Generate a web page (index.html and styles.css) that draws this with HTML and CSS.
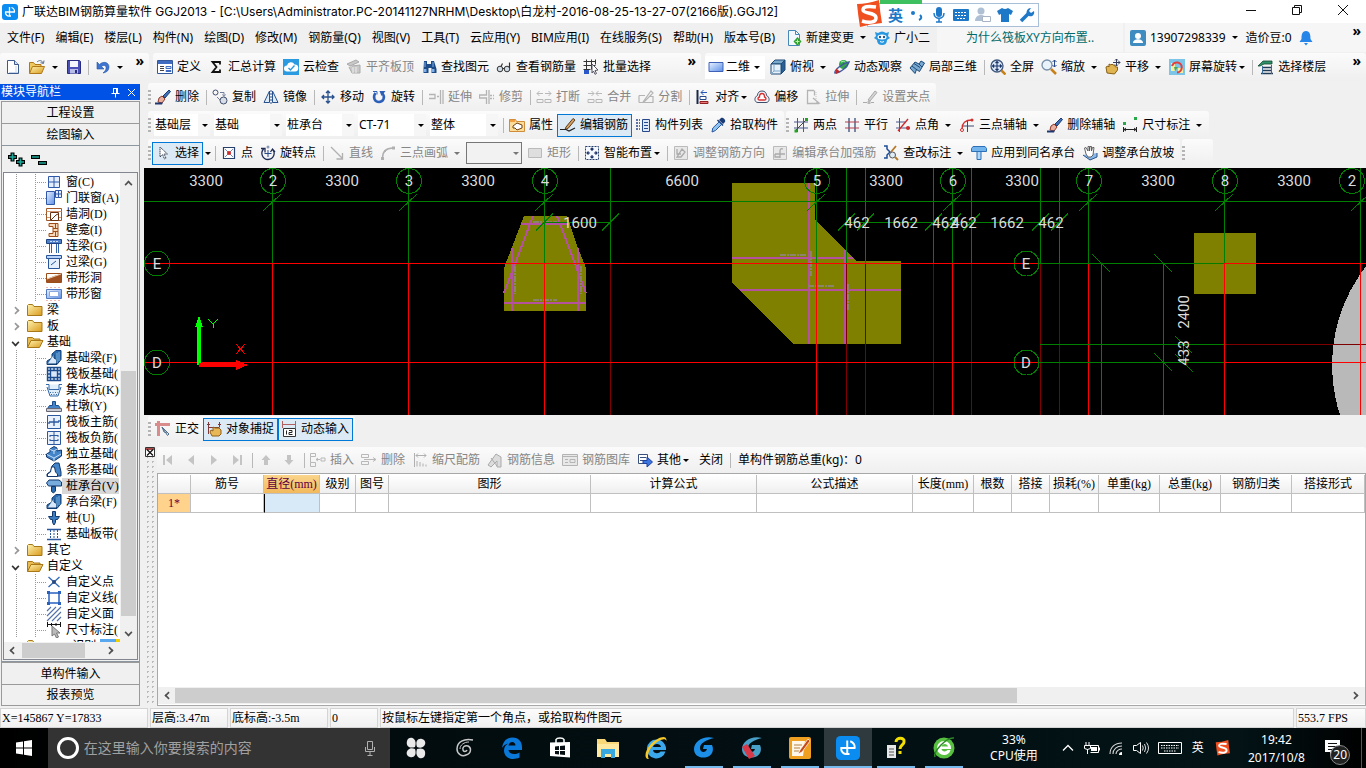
FILE: index.html
```html
<!DOCTYPE html>
<html lang="zh-CN">
<head>
  <meta charset="UTF-8" />
  <meta name="viewport" content="width=device-width, initial-scale=1.0"/>
  <title>广联达BIM钢筋算量软件 GGJ2013</title>
  <link rel="stylesheet" href="styles.css">
</head>
<body>

  <!-- icon set -->
  <svg class="sprite" aria-hidden="true">
    <defs>
      <linearGradient id="g-blue" x1="0" y1="0" x2="1" y2="1"><stop offset="0" stop-color="#eaf3ff"/><stop offset="1" stop-color="#5b8fe8"/></linearGradient>
      <linearGradient id="g-fold" x1="0" y1="0" x2="1" y2="1"><stop offset="0" stop-color="#fff3b0"/><stop offset="1" stop-color="#d99a1c"/></linearGradient>
    </defs>
    <symbol id="i-app" viewBox="0 0 16 16"><rect width="16" height="16" rx="3" fill="#0a8cf0"/><path d="M7.500 3v9M3 8h10M3.500 8a3.500 3.500 0 0 0 4 4h1.500M12.500 8a4.500 4.500 0 0 0-3-4.500" fill="none" stroke="#fff" stroke-width="1.300"/></symbol>
    <symbol id="i-new" viewBox="0 0 16 16"><path d="M2.500 1.500h7l4 4v9h-11z" fill="#fff" stroke="#3c5a8c"/><path d="M9.500 1.500v4h4" fill="#cfe0f5" stroke="#3c5a8c"/><path d="M11 7v7M4 13.500h9" stroke="#c3d4ea"/></symbol>
    <symbol id="i-open" viewBox="0 0 18 16"><path d="M1.500 14V3.500h4l1.500 2h6v3" fill="#f0c860" stroke="#b07818"/><path d="M1.500 14.500l3-7h12l-3 7z" fill="url(#g-fold)" stroke="#b07818"/><path d="M9 3c2-2 5-2 6 1m1-2.500l-.5 3-3-.8" fill="none" stroke="#5b6f8c"/></symbol>
    <symbol id="i-save" viewBox="0 0 16 16"><path d="M1.500 1.500h12l1 1v12h-13z" fill="#4a50b8" stroke="#282c80"/><path d="M4 2h8v6H4z" fill="#f4f6ff"/><path d="M4 10h8v4.500H4z" fill="#b8bce8"/><path d="M9 11h2v3H9z" fill="#282c80"/></symbol>
    <symbol id="i-undo" viewBox="0 0 16 16"><path d="M2 3v7h7L6.500 7.500C9 5.500 11.500 6.500 11 9.500c-.2 2-1.500 3-3 4.500 3.500-.5 6-2.500 6-6C14 3.500 8.500 1.500 4.500 5.500z" fill="#3f74d0" stroke="#2456a8" stroke-width=".6"/></symbol>
    <symbol id="i-def" viewBox="0 0 16 16"><path d="M.5 1.500h15v13H.5z" fill="#fff" stroke="#34589c"/><path d="M1 2h14v3H1z" fill="#3f6cc0"/><path d="M3 7.500h4M3 9.500h4M3 11.500h4" stroke="#444"/><path d="M9 7.500h5v2H9zM9 11.500h5v1H9z" fill="#dce8ff" stroke="#3f6cc0"/></symbol>
    <symbol id="i-sum" viewBox="0 0 16 16"><path d="M12 5.500V3H4.500l4 5-4 5H12v-2.500" fill="none" stroke="#111" stroke-width="1.800"/></symbol>
    <symbol id="i-cloud" viewBox="0 0 16 16"><rect width="16" height="16" fill="#2a9be0"/><path d="M4 12.500a3 3 0 0 1 0-6 4 4 0 0 1 7.500-1 3.500 3.500 0 0 1 .5 7z" fill="#fff"/><path d="M5.500 9l2 2 4-4.500" fill="none" stroke="#2a9be0" stroke-width="1.400"/></symbol>
    <symbol id="i-slab" viewBox="0 0 16 16"><path d="M1 5l9-4 3 2-9 4zM3 8l3 6h8V6l-8 1" fill="#c8c8c8" stroke="#aaa"/><path d="M7 8v6M10 8v6" stroke="#eee"/></symbol>
    <symbol id="i-find" viewBox="0 0 16 16"><path d="M3 2h3v3h4V2h3l2.500 8v4h-5V9h-3v5h-5v-4z" fill="#1f4a88"/><path d="M2.500 10h3v3h-3zM10.500 10h3v3h-3z" fill="#7fb0e8"/><path d="M4 3v5M12 3v5" stroke="#7fb0e8"/></symbol>
    <symbol id="i-glass" viewBox="0 0 16 16"><circle cx="4" cy="10" r="2.800" fill="#d0dae4" stroke="#333"/><circle cx="11" cy="10" r="2.800" fill="#d0dae4" stroke="#333"/><path d="M6.500 9.500h2M5 7.500l1.500-3M13.500 9V3.500" stroke="#333" fill="none" stroke-width="1.200"/></symbol>
    <symbol id="i-batch" viewBox="0 0 16 16"><path d="M.5 2.500h12M.5 6.500h12M.5 10.500h7M3.500.5v14M8.500.5v10M12.500.5v5" stroke="#333" fill="none"/><path d="M1 11h5v4H1z" fill="#2a58c8"/><path d="M9 5l6 6-3 .5 1.500 3-1.500.8-1.500-3.300L9 14z" fill="#fff" stroke="#556"/></symbol>
    <symbol id="i-flat" viewBox="0 0 16 16"><path d="M1 3.500h14v9H1z" fill="url(#g-blue)" stroke="#3f62b8"/></symbol>
    <symbol id="i-cube" viewBox="0 0 16 16"><path d="M1 5l4-4h10l-4 4z" fill="#7ca8cc" stroke="#1f4a78"/><path d="M11 5l4-4v10l-4 4z" fill="#2a5f94" stroke="#1f4a78"/><path d="M1 5h10v10H1z" fill="#e8f1fa" stroke="#1f4a78"/><path d="M4 5v7l-3 3M4 12h7" fill="none" stroke="#7ca8cc"/></symbol>
    <symbol id="i-orbit" viewBox="0 0 16 16"><circle cx="9.500" cy="5.500" r="4.500" fill="#30a848"/><path d="M7 3q3-2 5 1" stroke="#b8f0b8" fill="none"/><path d="M1 14c-1-3 8-10 14-11-1 4-8 11-14 11z" fill="none" stroke="#4058a0" stroke-width="1.500"/><path d="M2 9.500l4 3-4 2.500z" fill="#c02828"/></symbol>
    <symbol id="i-part" viewBox="0 0 16 16"><path d="M1 9l5-6 4 2 2-3 3.500 2-5 8.500-3-2-1.500 4z" fill="#78a8d0" stroke="#1f4a78"/><path d="M3 7l5 4M5 4.500l6 4M10 5l3 3" stroke="#1f4a78" fill="none"/></symbol>
    <symbol id="i-full" viewBox="0 0 16 16"><circle cx="7" cy="7" r="6" fill="#dceafa" stroke="#40587c" stroke-width="1.300"/><path d="M11.500 11.500l4 4" stroke="#c88018" stroke-width="2.500"/><path d="M7 2.500v9M2.500 7h9M5.500 4L7 2.500 8.500 4M5.500 10L7 11.500 8.500 10M4 5.500L2.500 7 4 8.500M10 5.500L11.500 7 10 8.500" stroke="#1a3468" fill="none" stroke-width="1.100"/></symbol>
    <symbol id="i-zoom" viewBox="0 0 16 16"><circle cx="6" cy="6" r="5" fill="#e8f3fc" stroke="#7890a8" stroke-width="1.300"/><path d="M10 10l5 5" stroke="#c88018" stroke-width="2.500"/><path d="M13.500 1v7M11.500 3l2-2 2 2M11.500 6l2 2 2-2" stroke="#28488c" fill="none"/></symbol>
    <symbol id="i-pan" viewBox="0 0 16 16"><path d="M2 14l-1-6 2-1 1 1V5l2 1 1-1 1 1 1.500 0 1 2 2 0v3l-3 4z" fill="#e0b450" stroke="#886018"/><path d="M11.500 0v7M8 3.500h7M10 1.500L11.500 0 13 1.500M13.500 2L15 3.500 13.500 5M10 5.500L11.500 7 13 5.500" stroke="#333c58" fill="none"/></symbol>
    <symbol id="i-scr" viewBox="0 0 16 16"><rect width="16" height="16" fill="#7cc4e8"/><path d="M2 4h4v8H2zM9 9h5v5H9z" fill="#f4f0a0"/><path d="M3 7a5 5 0 1 1 5 6.500" fill="none" stroke="#e04040" stroke-width="2"/><path d="M5 8h4l-3 4z" fill="#4aa858"/></symbol>
    <symbol id="i-floor" viewBox="0 0 16 16"><path d="M0 7l5-5h9v3H6L2 7z" fill="#2f8f68" stroke="#104830" stroke-width=".8"/><path d="M4 8.500h10M4 11.500h10M3 14.500h12" stroke="#223c58" stroke-width="1.300"/><path d="M4.500 7v8M13.500 6v9" stroke="#3a6c98"/></symbol>
    <symbol id="i-brush" viewBox="0 0 16 16"><path d="M8 7l6-6 1.500 1.500L10 9z" fill="#3c70b8" stroke="#1f3c70"/><path d="M4 9l3-2 3 3-3 4-4-1z" fill="#e8b0a0" stroke="#903828"/><path d="M0 13.500h8l-1 2H0z" fill="#203870"/></symbol>
    <symbol id="i-copy" viewBox="0 0 16 16"><circle cx="3.500" cy="3.500" r="2.500" fill="none" stroke="#40506c"/><circle cx="11.500" cy="11.500" r="3.500" fill="#d8dee8" stroke="#40506c"/><path d="M8 3.500h4v3M10.500 5.500l1.500 2 1.500-2M5 8l3 3" fill="none" stroke="#70809c"/></symbol>
    <symbol id="i-mirror" viewBox="0 0 16 16"><path d="M6.500 2v11.500H1zM9.500 2v11.500H15z" fill="#dcebfa" stroke="#28508c"/><path d="M8 1v14" stroke="#28508c" stroke-dasharray="2 1"/></symbol>
    <symbol id="i-move" viewBox="0 0 16 16"><path d="M8 2v12M2 8h12M6 4l2-2 2 2M6 12l2 2 2-2M4 6L2 8l2 2M12 6l2 2-2 2" fill="none" stroke="#28508c" stroke-width="1.300"/></symbol>
    <symbol id="i-rot" viewBox="0 0 16 16"><path d="M4.500 4C1.500 8 3.500 13 8 13s6.500-5 3.500-8.500" fill="none" stroke="#2c60b8" stroke-width="2.500"/><path d="M8.500 2h6l-4 5z" fill="#2c60b8"/><path d="M2 2.500h4v3" fill="none" stroke="#2c60b8"/></symbol>
    <symbol id="i-ext" viewBox="0 0 16 16"><path d="M1 5.500h6v4H1M9 7.500h2M12.500 1v14M15 1v14" fill="none" stroke="#b4b4b4" stroke-width="1.300"/></symbol>
    <symbol id="i-trim" viewBox="0 0 16 16"><path d="M7.500 1v5h-7v3h7v6M10 1v14M11 6.500h2M11 9.500h2M14 6.500h1M14 9.500h1" fill="none" stroke="#b4b4b4" stroke-width="1.300"/></symbol>
    <symbol id="i-brk" viewBox="0 0 16 16"><path d="M7 4.500H1L3.500 2M1 4.500L3.500 7M9 4.500h6L12.500 2M15 4.500L12.500 7M1 10.500h6v3H1zM9 10.500h6v3H9z" fill="none" stroke="#b8b8b8"/></symbol>
    <symbol id="i-mrg" viewBox="0 0 16 16"><path d="M1 4.500h6L4.500 2M7 4.500L4.500 7M15 4.500H9L11.500 2M9 4.500L11.500 7M1 10.500h6v3H1zM9 10.500h6v3H9z" fill="none" stroke="#b8b8b8"/></symbol>
    <symbol id="i-split" viewBox="0 0 16 16"><path d="M1 6.500h6M1 13.500h14v-6h-3M1 6.500v7M5 13l8-11 2 2-8 8z" fill="none" stroke="#b4b4b4" stroke-width="1.200"/></symbol>
    <symbol id="i-align" viewBox="0 0 16 16"><path d="M2.500 1v14" stroke="#18284c" stroke-width="2"/><path d="M5 7.500h6v3H5z" fill="#fff" stroke="#28488c"/><path d="M5 12.500h8v2H5z" fill="#e87878" stroke="#902020"/><path d="M12 3.500H6L8.500 1M6 3.500L8.500 6" fill="none" stroke="#2858b8"/></symbol>
    <symbol id="i-offset" viewBox="0 0 16 16"><path d="M8 2c3 0 4.500 2 4.500 4.500C16 8 16 13.500 12 13.500H4C0 13.500 0 8 3.500 6.500 3.500 4 5 2 8 2z" fill="#f4f6fa" stroke="#3c4c68"/><path d="M8 4.500c1.500 0 2.500 1.500 2.500 3.500 2 .5 2 3 0 3h-5c-2 0-2-2.500 0-3 0-2 1-3.500 2.500-3.500z" fill="#fff" stroke="#d83030" stroke-width="1.300"/></symbol>
    <symbol id="i-pull" viewBox="0 0 16 16"><path d="M9 1.500H2.500v13H14M9.500 1.500v5M8 9l6 5h-3" fill="none" stroke="#b4b4b4" stroke-width="1.300"/><path d="M11 3v8" stroke="#c4c4c4" stroke-dasharray="1 1"/></symbol>
    <symbol id="i-grip" viewBox="0 0 16 16"><path d="M6 11l7-9 2 1.500-7 8.500z" fill="#d4d4d4" stroke="#aaa"/><path d="M1 13.500h4M9 13.500h3" stroke="#aaa"/><path d="M5.500 12h3v3h-3z" fill="#b8b8b8"/></symbol>
    <symbol id="i-prop" viewBox="0 0 16 16"><path d="M.5 2.500h6l1 2h8v10H.5z" fill="#fbdc98" stroke="#d08c38"/><path d="M4 9l4-3 5 2v3l-5 2-2-2H4z" fill="#fff" stroke="#704010"/><path d="M1 3h5v2H1z" fill="#f0a040"/></symbol>
    <symbol id="i-pen" viewBox="0 0 16 16"><path d="M6 10l7-8.500 2 1.500-7 8.500-3 1z" fill="#d8a060" stroke="#5c3c18"/><path d="M0 12.500h6l3 1.500 6-3" fill="none" stroke="#222" stroke-width="1.200"/></symbol>
    <symbol id="i-list" viewBox="0 0 16 16"><path d="M7.500 2.500h7v12h-7z" fill="#dce8fa" stroke="#28488c"/><path d="M9 5.500h4M9 8.500h4M9 11.500h4" stroke="#28488c"/><path d="M1 3h2M4 3h1M1 6h2M4 6h1M1 9h2M4 9h1M1 12h2M4 12h1" stroke="#28488c" stroke-width="1.600"/></symbol>
    <symbol id="i-pick" viewBox="0 0 16 16"><path d="M9 3l4 4 2-2c1-2-2-5-4-4z" fill="#1c3c78"/><path d="M7.500 3l5.500 5.500" stroke="#1c3c78" stroke-width="1.500"/><path d="M9 5l2.500 2.500-6 6L2 15l.8-4z" fill="#90c4f0" stroke="#2858a0"/></symbol>
    <symbol id="i-two" viewBox="0 0 16 16"><path d="M4.500 1v14M10.500 1v14M1 5h14M1 11h14" stroke="#4a5890"/><path d="M2 14L14 2" stroke="#444"/><path d="M1.500 12.500h3v3h-3zM12 1h3v3h-3z" fill="#28a028"/></symbol>
    <symbol id="i-par" viewBox="0 0 16 16"><path d="M5 1v14M11 1v14" stroke="#28406c" stroke-width="1.200"/><path d="M1 5h14M1 11h14" stroke="#b84050" stroke-width="1.200"/></symbol>
    <symbol id="i-ang" viewBox="0 0 16 16"><path d="M4.500 1v14M1 11h14M1 5h10" stroke="#4a5890"/><path d="M3 14L13 2" stroke="#d02828" stroke-width="1.300"/><circle cx="13" cy="11" r="2" fill="#d02828"/></symbol>
    <symbol id="i-three" viewBox="0 0 16 16"><path d="M8.500 3v12M3 9h12" stroke="#404870"/><path d="M3 12C3 6 6 3 13 3" fill="none" stroke="#d03030" stroke-width="1.300"/><circle cx="3" cy="13" r="1.500" fill="#fff" stroke="#d03030"/><circle cx="13" cy="3" r="1.500" fill="#d03030"/></symbol>
    <symbol id="i-dim" viewBox="0 0 16 16"><path d="M1 5h3v3H1zM12 0h3v3h-3z" fill="#28a848"/><path d="M1.500 10v5M14.500 10v5M2 12.500h12M4 11l-2 1.500L4 14M12 11l2 1.500-2 1.500" fill="none" stroke="#222"/></symbol>
    <symbol id="i-cur" viewBox="0 0 16 16"><path d="M5 2v10l2.500-2.500L9.500 14l1.500-.8-2-4.200h3.500z" fill="#fff" stroke="#404858" stroke-dasharray="1.500 .5"/></symbol>
    <symbol id="i-pt" viewBox="0 0 16 16"><path d="M2.500 2.500h11v11h-11z" fill="#fff" stroke="#28406c" stroke-width="1.200"/><path d="M4 4l8 8M12 4l-8 8" stroke="#7088b8"/><circle cx="8" cy="8" r="2" fill="#d02828"/></symbol>
    <symbol id="i-rpt" viewBox="0 0 16 16"><path d="M3.500 4C0 8 2.500 14.500 8 14.500S16 8 12.500 4.500M1 3.500h4v4M15 7l-2.500-3-2 3" fill="none" stroke="#202c58" stroke-width="1.300"/><path d="M8 5v7M4.500 8.500h7" stroke="#28488c"/><circle cx="8" cy="2" r="1.500" fill="#8898b8"/></symbol>
    <symbol id="i-line" viewBox="0 0 16 16"><path d="M2 2l11 11M13.500 8v6h-6" fill="none" stroke="#b0b0b0" stroke-width="1.300"/></symbol>
    <symbol id="i-arc" viewBox="0 0 16 16"><path d="M2.500 13C2.500 7 6 3 13 3" fill="none" stroke="#b0b0b0" stroke-width="1.400"/><path d="M1 12h3v3H1zM12 1.500h3v3h-3zM4 5h2v2H4z" fill="#b0b0b0"/></symbol>
    <symbol id="i-rect" viewBox="0 0 16 16"><path d="M1.500 3.500h13v9h-13z" fill="#dedede" stroke="#bbb"/></symbol>
    <symbol id="i-smart" viewBox="0 0 16 16"><path d="M1.500 1.500h13v13h-13z" fill="#f4f8ff" stroke="#28406c" stroke-dasharray="2 1"/><path d="M8 3v3M8 10v3M3 8h3M10 8h3M6.500 4.500L8 3l1.500 1.500M6.500 11.500L8 13l1.500-1.500M4.500 6.500L3 8l1.500 1.500M11.500 6.500L13 8l-1.500 1.500" stroke="#203468" fill="none" stroke-width="1.200"/></symbol>
    <symbol id="i-dir" viewBox="0 0 16 16"><path d="M1.500 1.500h13v13h-13z" fill="#e8e8e8" stroke="#bbb"/><path d="M4 12l5-8 3 3-4 5zM4 4v5h4" fill="none" stroke="#aaa" stroke-width="1.300"/></symbol>
    <symbol id="i-stf" viewBox="0 0 16 16"><path d="M1.500 1.500h13v13h-13z" fill="#e8e8e8" stroke="#bbb"/><path d="M8 13V6q0-3 3-2M3 9h10M3 9v3h5" fill="none" stroke="#aaa" stroke-width="1.300"/></symbol>
    <symbol id="i-chk" viewBox="0 0 16 16"><path d="M1 1h3v3l3 3-3 3v3H1" fill="none" stroke="#1c4c98" stroke-width="1.500"/><circle cx="9.500" cy="10" r="3" fill="#e0ecf8" stroke="#555"/><path d="M8 7l5-6M12 12l3 3" stroke="#b87828" stroke-width="1.800"/></symbol>
    <symbol id="i-same" viewBox="0 0 16 16"><path d="M2 1.500h12l1.500 2v3h-15v-3z" fill="#74b4ec" stroke="#2c70b8"/><path d="M6 6.500h4v8H6z" fill="#b0d8f8" stroke="#2c70b8"/></symbol>
    <symbol id="i-slope" viewBox="0 0 16 16"><path d="M1 10l7 5 7-3V8" fill="#88b8e8" stroke="#28508c"/><path d="M4 9L2.500 3l1.500-.5L6 6V1.500h1.500V6l.5-4.500h1.500V6l1-3.500h1.500L11 10l-2 2H6z" fill="#fff" stroke="#555" stroke-width=".9"/></symbol>
    <symbol id="i-ortho" viewBox="0 0 16 16"><path d="M3.500 0v15M0 3.500h15" stroke="#d88c8c" stroke-width="3"/><path d="M7 6l7 7-1.500 1.500zM7 6l2 5 3 1" fill="#dfe8f2" stroke="#54708c"/></symbol>
    <symbol id="i-snap" viewBox="0 0 16 16"><path d="M2.500 1v12M13.500 1v5M2.500 6.500h11M1 3.500h3M12 3.500h3" stroke="#803838" fill="none"/><path d="M6 15l-2-4 1-2 2 1V6l2 1h4l2 2v4l-2 2z" fill="#e8b858" stroke="#906018"/></symbol>
    <symbol id="i-dyn" viewBox="0 0 16 16"><path d="M1.500 0v7M14.500 0v7M2 3.500h12" stroke="#b06060" fill="none"/><path d="M2.500 7.500h12v8h-12z" fill="#fff" stroke="#333"/><path d="M5.500 9.500v4M8 9.500h3v2H8v2h3.500" stroke="#222" fill="none"/></symbol>
    <symbol id="i-first" viewBox="0 0 16 16"><path d="M3 3h2v10H3zM12 3v10L6 8z" fill="#c4c4c4"/></symbol>
    <symbol id="i-prev" viewBox="0 0 16 16"><path d="M11 3v10L5 8z" fill="#c4c4c4"/></symbol>
    <symbol id="i-next" viewBox="0 0 16 16"><path d="M5 3v10l6-5z" fill="#c4c4c4"/></symbol>
    <symbol id="i-last" viewBox="0 0 16 16"><path d="M4 3v10l6-5zM11 3h2v10h-2z" fill="#c4c4c4"/></symbol>
    <symbol id="i-up" viewBox="0 0 16 16"><path d="M8 3l4.500 5H10v5H6V8H3.500z" fill="#c4c4c4"/></symbol>
    <symbol id="i-down" viewBox="0 0 16 16"><path d="M8 13l4.500-5H10V3H6v5H3.500z" fill="#c4c4c4"/></symbol>
    <symbol id="i-ins" viewBox="0 0 16 16"><path d="M.5 1.500h5v3h-5zM.5 10.500h5v4h-5zM.5 4.500v6M15 6h-4v3h4zM6 7.500h4M8 6L6 7.500 8 9" fill="none" stroke="#b8b8b8"/></symbol>
    <symbol id="i-delr" viewBox="0 0 16 16"><path d="M.5 2.500h7v3h-7zM.5 9.500h7v3h-7zM3 7.500h12M12 5.500l3 2-3 2" fill="none" stroke="#b8b8b8"/></symbol>
    <symbol id="i-sca" viewBox="0 0 16 16"><path d="M2.500 1v14M5 14.500V9M8 14.500V10M11 14.500v-3M14 14.500v-2M4 3.500h10M6 1.500l-2 2 2 2M12 1.500l2 2-2 2" fill="none" stroke="#b0b0b0"/></symbol>
    <symbol id="i-info" viewBox="0 0 16 16"><path d="M1 13L9 2l5 3v10h-4V9l-6 6z" fill="#dcdcdc" stroke="#aaa"/><path d="M4 6l6 8" stroke="#aaa"/></symbol>
    <symbol id="i-lib" viewBox="0 0 16 16"><path d="M.5 2.500h15v11H.5z" fill="#e8e8e8" stroke="#b4b4b4"/><path d="M1 4.500h14M3 7.500h3M3 10.500h3M8 7.500h5v3H8z" stroke="#b4b4b4" fill="none"/></symbol>
    <symbol id="i-other" viewBox="0 0 16 16"><path d="M1.500 2.500h9v9h-9z" fill="#fff" stroke="#38507c"/><path d="M3 5.500h6M3 8.500h3" stroke="#38507c"/><path d="M6 8.500h4V5l5.500 5-5.500 5v-3.500H6z" fill="#3c74e0" stroke="#1c409c"/></symbol>
    <symbol id="i-doc" viewBox="0 0 16 16"><path d="M2.500.5h7l4 4v11h-11z" fill="#f2f8fe" stroke="#4888b8"/><path d="M9.500.5v4h4" fill="none" stroke="#4888b8"/><path d="M11.500 7l4 4.500-4 4.500-4-4.500z" fill="#30a030"/><path d="M11.500 9.500v4M9.500 11.500h4" stroke="#b8f0a0"/></symbol>
    <symbol id="i-bot" viewBox="0 0 16 16"><path d="M1 2l3 1q4-3 8 0l3-1-1 4 2 2-3 2q0 5-5 5t-5-5L0 8l2-2z" fill="#2a98e0"/><ellipse cx="8" cy="7" rx="4.500" ry="2.500" fill="#fff"/><circle cx="6" cy="7" r="1.200" fill="#205890"/><circle cx="10" cy="7" r="1.200" fill="#205890"/><path d="M6 11.500q2 1.500 4 0" stroke="#fff" fill="none"/></symbol>
    <symbol id="i-user" viewBox="0 0 16 16"><rect width="16" height="16" rx="2" fill="#3f8cc0"/><circle cx="8" cy="6" r="3" fill="#fff"/><path d="M3 13c0-5 10-5 10 0z" fill="#fff"/></symbol>
    <symbol id="i-bell" viewBox="0 0 16 16"><path d="M8 1c4 0 4.500 4 4.500 8l2 3h-13l2-3C3.500 5 4 1 8 1zM6 13h4l-2 2.500z" fill="#2585e8"/></symbol>
    <symbol id="i-fold" viewBox="0 0 18 16"><path d="M1.500 13.500v-10l1-1h4l1.500 2h8v9z" fill="url(#g-fold)" stroke="#a87818"/></symbol>
    <symbol id="i-foldo" viewBox="0 0 18 16"><path d="M1.500 13.500v-10h5l1.500 1.500h6V8" fill="#e8bc50" stroke="#a87818"/><path d="M1.500 13.500L5 6.500h12l-3.500 7z" fill="url(#g-fold)" stroke="#a87818"/></symbol>

    <!-- tree icons -->
    <symbol id="t-win" viewBox="0 0 16 16"><path d="M2.500 2.500h11v11h-11z" fill="#e4eeff" stroke="#3058a8"/><path d="M8 3v10M3 8h10" stroke="#3058a8"/></symbol>
    <symbol id="t-door" viewBox="0 0 16 16"><path d="M.5 1.500h8v13h-8z" fill="url(#g-blue)" stroke="#3058a8"/><path d="M9.500.5h6v7h-6zM12.500 1v6M10 4h5" fill="#e4eeff" stroke="#3058a8"/></symbol>
    <symbol id="t-hole" viewBox="0 0 16 16"><path d="M.5 2.500h15v12H.5z" fill="#fff" stroke="#a05828"/><path d="M.5 5.500h15M4 11.500H1M12 11.500h3" stroke="#d09870"/><path d="M4.500 6.500h8v8h-8zM5 14l5-5 2-1" fill="#fff" stroke="#6c3410"/></symbol>
    <symbol id="t-niche" viewBox="0 0 16 16"><path d="M3 1.500h9v13H3v-3h4v-7H3z" fill="#f8d8b8" stroke="#9c4c18"/><path d="M7 6.500h5M7 9.500h5M9.500 2v4M9.500 10v4" stroke="#9c4c18"/></symbol>
    <symbol id="t-lb" viewBox="0 0 16 16"><path d="M.5 1.500h15v4H.5z" fill="#5080c8" stroke="#1c4484"/><path d="M3.500 6v9M5.500 6v9M10.500 6v9M12.500 6v9" stroke="#3464ac"/><path d="M4 3.500h8" stroke="#c8dcf8" stroke-dasharray="2 1"/></symbol>
    <symbol id="t-gl" viewBox="0 0 16 16"><path d="M.5 1.500h15v3H.5z" fill="#b8d4f8" stroke="#28549c"/><path d="M2.500 4.500h11v10h-11z" fill="#e4eeff" stroke="#28549c"/><path d="M5 11l5-4" stroke="#28549c"/></symbol>
    <symbol id="t-sh" viewBox="0 0 16 16"><path d="M.5 3.500h15v9H.5z" fill="#fff" stroke="#9c4c18"/><path d="M1 12V9l7-3 7-2v8z" fill="#a05020"/><path d="M1 9l14-5" stroke="#e8c8a8"/></symbol>
    <symbol id="t-sw" viewBox="0 0 16 16"><path d="M.5 3.500h15v9H.5z" fill="url(#g-blue)" stroke="#5078c0"/><path d="M3.500 5.500h9v5h-9z" fill="#fff" stroke="#88a8e0"/><path d="M0 1.500h16M0 14.500h16" stroke="#f0b8b0" stroke-dasharray="2 2"/></symbol>
    <symbol id="t-fb" viewBox="0 0 16 16"><path d="M1 14.500V11l5-3V4l4-3.500h5v9l-4 5z" fill="#2c6cb0" stroke="#123c74"/><path d="M1.500 14h9V9.500L8 8V4.500" fill="#d8e8fa" stroke="#123c74"/><path d="M11 3v10M13 2v9" stroke="#78b0e0" fill="none"/></symbol>
    <symbol id="t-raft" viewBox="0 0 16 16"><path d="M1.500 1.500h13v13h-13zM4.500 1.500v13M11.500 1.500v13M1.500 4.500h13M1.500 11.500h13M8 2v2M8 12v2M2 8h2M12 8h2" fill="#d8e8fa" stroke="#1c4c8c" stroke-width="1.400"/></symbol>
    <symbol id="t-pit" viewBox="0 0 16 16"><path d="M0 2.500h3v5h10v-5h3M1 5l3 9h8l3-9" fill="#e0eefc" stroke="#3468a8"/><path d="M4 10.500h8M5 12.500h6" stroke="#3468a8" stroke-dasharray="1 1.500"/></symbol>
    <symbol id="t-pier" viewBox="0 0 16 16"><path d="M6.500 3.500h3v4h3l2 3h-13l2-3h3z" fill="#4484c8" stroke="#1c4c8c"/><path d="M.5 10.500h15v3H.5z" fill="#c8ccd4" stroke="#667"/></symbol>
    <symbol id="t-main" viewBox="0 0 16 16"><path d="M1.500 1.500h13v13h-13z" fill="#e8f1fc" stroke="#2c58a0"/><path d="M8 4v8M3 8h10M3 8v2M13 8V6" stroke="#2c58a0" fill="none" stroke-width="1.300"/></symbol>
    <symbol id="t-neg" viewBox="0 0 16 16"><path d="M1.500 1.500h13v13h-13z" fill="#e8f1fc" stroke="#2c58a0"/><path d="M8 2v12M4 5.500h8M4 10.500h8M4 5v2M12 5v2M4 9v2M12 9v2" stroke="#2c58a0" fill="none"/></symbol>
    <symbol id="t-iso" viewBox="0 0 16 16"><path d="M.5 8L4 6V3l4-2.500L11 2v3l4.500-1v6L8 15l-7.500-4z" fill="#4484c8" stroke="#12386c"/><path d="M1 8.500l7 3.500 7-4M8 12v3M4 3.500L8 5l3-2M8 5v3" stroke="#c8e0f8" fill="none"/></symbol>
    <symbol id="t-strip" viewBox="0 0 16 16"><path d="M1 14.500V12l4-3 1-5 3-3h4l2 9v4z" fill="#4484c8" stroke="#12386c"/><path d="M1.500 14.500V12l3-2 1-5h3l1 5 2 2v2.500z" fill="#fff" stroke="#12386c"/></symbol>
    <symbol id="t-cap" viewBox="0 0 16 16"><path d="M3 2h10l2.500 2v4h-13L.5 5z" fill="#78acdc" stroke="#12386c"/><path d="M5.500 8.500h4V13l-2 2-2-1.500z" fill="#2c6cb0" stroke="#12386c"/></symbol>
    <symbol id="t-pile" viewBox="0 0 16 16"><path d="M6.500 1.500h3v5h4l-2 3h-2v3L8 15l-1.500-2.500v-3h-2l-2-3h4z" fill="#3c7cc0" stroke="#12386c"/></symbol>
    <symbol id="t-band" viewBox="0 0 16 16"><path d="M1 3.500h14M1 13.500h14" stroke="#2c58a0" stroke-width="1.500"/><path d="M4.500 4v9M8 4v9M11.500 4v9" stroke="#2c58a0" stroke-dasharray="2 1"/></symbol>
    <symbol id="t-cx" viewBox="0 0 16 16"><path d="M2.500 3l11 10M13.500 3l-11 10" stroke="#3068b8" stroke-width="1.300"/><circle cx="8" cy="8" r="2" fill="#28487c"/></symbol>
    <symbol id="t-cl" viewBox="0 0 16 16"><path d="M3 3h10v10H3z" fill="none" stroke="#2860c0" stroke-width="1.500"/><path d="M1 1h3v3H1zM12 1h3v3h-3zM1 12h3v3H1zM12 12h3v3h-3z" fill="#2860c0"/></symbol>
    <symbol id="t-cf" viewBox="0 0 16 16"><path d="M1 5l4-4M1 10L10 1M1 15L15 1M6 15l9-9M11 15l4-4" stroke="#5470a8" stroke-width="1.100"/></symbol>
    <symbol id="t-cd" viewBox="0 0 16 16"><path d="M1.500 0v5M14.500 0v5M2 2.500h12M5.500 1v3M10 1v3" stroke="#111"/><path d="M6 4v10l2.500-2 2 4 2-1-2-4H14z" fill="#bbb" stroke="#777"/></symbol>

    <!-- taskbar icons -->
    <symbol id="k-start" viewBox="0 0 18 18"><path d="M1 3.500l7-1v6H1zM9 2.300l8-1.300v7.500H9zM1 9.500h7v6l-7-1zM9 9.500h8V17l-8-1.300z" fill="#fff"/></symbol>
    <symbol id="k-mic" viewBox="0 0 16 16"><path d="M5.500 1.500h5v8h-5zM3.500 7v4.500h9V7M8 12v3M5.500 15.500h5" fill="none" stroke="#b0b0b0"/></symbol>
    <symbol id="k-fan" viewBox="0 0 24 24"><path d="M11 11C4 13 2 9 3 5s5-4 7-2 2 5 1 8zM13 11c-2-6 1-9 5-8s4 5 2 7-4 2-7 1zM13 13c7-2 9 2 8 6s-5 4-7 2-2-5-1-8zM11 13c2 6-1 9-5 8s-4-5-2-7 4-2 7-1z" fill="#eaeaea"/></symbol>
    <symbol id="k-swirl" viewBox="0 0 24 24"><path d="M21 4c-9-2-16 2-16 9 0 5 5 8 9 6 5-1 6-7 2-9-3-1-6 1-5 4 .5 2 3 2 4 0" fill="none" stroke="#c8c8c8" stroke-width="1.500"/><path d="M8 13c0-4 4-7 9-7" fill="none" stroke="#c8c8c8"/></symbol>
    <symbol id="k-edge" viewBox="0 0 24 24"><path d="M2 12C3 5 7 1.500 12.500 1.500 19 1.500 22 6 22 11v3H8.500c.5 4 6 5.500 11 2.500v5C12 25 4 22 4 14.500c0-3.500 2-6 4.500-7C5.500 8 3.500 9.500 2 12zm6.500-2.500h7c0-4.500-6-5-7 0z" fill="#0a78d8"/></symbol>
    <symbol id="k-store" viewBox="0 0 24 24"><path d="M2 6.500l20-.5v15.500L2 20z" fill="#fff"/><path d="M8 7V3.500c1-2 7-2 8 0V7" fill="none" stroke="#fff" stroke-width="1.500"/><path d="M7 10.500l4-.5v4H7zM12 10l5-.5V14h-5zM7 15h4v3.500l-4-.5zM12 15h5v4l-5-.5z" fill="#061014"/></symbol>
    <symbol id="k-exp" viewBox="0 0 24 24"><path d="M1 3h8l2 3h12v15H1z" fill="#f8d878"/><path d="M1 8h22v13H1z" fill="#ffe9a0"/><path d="M5 22v-9h14v9h-4v-4h-6v4z" fill="#38a8e0"/></symbol>
    <symbol id="k-ie" viewBox="0 0 24 24"><path d="M12.500 3.500a9.500 9.500 0 0 1 9.500 10.500H9c.5 4 6 4 7.500 1.500h5A9.500 9.500 0 1 1 12.500 3.500zM9 11h8c-.5-4-7.500-4-8 0z" fill="#3ca8ec"/><path d="M5 23C0 24 0 15 7 8 14 1 23-2 22.500 5c-1-4-8-1-12.500 3.500C4 14 3 21 5 23z" fill="#f4c828"/></symbol>
    <symbol id="k-gld" viewBox="0 0 24 24"><path d="M22 2C12-1 2 5 2 13c0 7 7 10 13 8 6-1.500 7-8 5-12h-8l-1 4h4c-1 4-7 4-7-1 0-5 6-8 14-10z" fill="#1c90e8"/></symbol>
    <symbol id="k-pdf" viewBox="0 0 24 24"><path d="M22 2C12-1 2 5 2 13c0 7 7 10 13 8 6-1.500 7-8 5-12h-8l-1 4h4c-1 4-7 4-7-1 0-5 6-8 14-10z" fill="#48a0c8"/><path d="M2 11l5-3 8 12-6 3z" fill="#d83848"/></symbol>
    <symbol id="k-note" viewBox="0 0 24 24"><rect x="1" y="1" width="22" height="22" rx="2" fill="#f0a020"/><path d="M4 5h13l-2 15H4z" fill="#fff8e8"/><path d="M6 9h8M6 12h6M6 15h5" stroke="#b08040"/><path d="M20 3l-8 11-2 4 4-2 8-11z" fill="#c84818" stroke="#fff" stroke-width=".7"/></symbol>
    <symbol id="k-help" viewBox="0 0 24 24"><path d="M3 9h9v13H3z" fill="#e8e8e8"/><path d="M5 13h5M5 16h5M5 19h5" stroke="#555"/><path d="M12 6c0-5 9-5 8 0 0 3-4 3-4 7M16 15v3" fill="none" stroke="#f4e000" stroke-width="3"/></symbol>
    <symbol id="k-green" viewBox="0 0 24 24"><circle cx="12" cy="12" r="10.500" fill="#58c040"/><path d="M12 5a7 7 0 0 1 7 8H9.500c.5 3 4.500 3 6 1h3c-1 4-4 5-6.500 5a7 7 0 0 1 0-14zM9.500 10.500H16c-.5-3.500-6-3.500-6.500 0z" fill="#fff"/><path d="M3 21C1 16 14 1 22 2" stroke="#2c8828" stroke-width="1.500" fill="none"/></symbol>
    <symbol id="k-up" viewBox="0 0 16 16"><path d="M3 10.500l5-5 5 5" fill="none" stroke="#fff" stroke-width="1.300"/></symbol>
    <symbol id="k-bat" viewBox="0 0 16 16"><path d="M3.500 5.500h11v7h-8M15.500 7.500v3" fill="none" stroke="#fff"/><path d="M7 7h6v4H7z" fill="#fff"/><path d="M2 2v3M5 2v3M.5 5.500h6v3l-3 1-3-1zM3.500 9v5" fill="none" stroke="#fff"/></symbol>
    <symbol id="k-wifi" viewBox="0 0 16 16"><path d="M2 14C2 7 7 3 14 3M5 14c0-5 4-8 9-8M8 14c0-3 3-5 6-5" fill="none" stroke="#d8d8d8" stroke-width="1.100"/><path d="M11 15a3 3 0 0 1 3-3v3z" fill="#fff"/></symbol>
    <symbol id="k-vol" viewBox="0 0 18 16"><path d="M1.500 5.500h3l4-3v11l-4-3h-3z" fill="none" stroke="#fff"/><path d="M10.500 5.500q1.500 2.500 0 5M12.500 4q2.500 4 0 8M14.500 2.500q4 5.500 0 11" fill="none" stroke="#e0e0e0"/></symbol>
    <symbol id="k-kb" viewBox="0 0 24 16"><path d="M.5 2.500h23v11H.5z" fill="none" stroke="#fff"/><path d="M3 5.500h18M3 8h18M6 11h12" stroke="#fff" stroke-dasharray="1.500 1"/></symbol>
    <symbol id="k-sogou" viewBox="0 0 28 28"><path d="M3 4q10 0 22-4 1 12 3 23-12 1-22 4Q4 15 3 4z" fill="#f05020"/><path d="M22 7Q9 5 9 10c0 4 13 2 13 8 0 5-8 5-14 3" fill="none" stroke="#fff" stroke-width="3.500"/></symbol>
    <symbol id="k-act" viewBox="0 0 18 18"><path d="M1 1h15v12H9l-3 4v-4H1z" fill="#fff"/><path d="M4 4.500h9M4 7.500h9M4 10.500h6" stroke="#111"/></symbol>
  </svg>

  <header class="titlebar">
    <svg class="ico"><use href="#i-app"/></svg>
    <h1>广联达BIM钢筋算量软件 GGJ2013 - [C:\Users\Administrator.PC-20141127NRHM\Desktop\白龙村-2016-08-25-13-27-07(2166版).GGJ12]</h1>
    <div class="win-buttons">
      <button aria-label="最小化"><svg class="ico" viewBox="0 0 16 16"><path d="M3 8.500h10" stroke="#111"/></svg></button>
      <button aria-label="还原"><svg class="ico" viewBox="0 0 16 16"><path d="M3.500 5.500h7v7h-7zM5.500 5V3.500h7v7H11" fill="none" stroke="#111"/></svg></button>
      <button aria-label="关闭"><svg class="ico" viewBox="0 0 16 16"><path d="M3 3l10 10M13 3L3 13" stroke="#111"/></svg></button>
    </div>
  </header>

  <!-- floating input method bar -->
  <div class="ime">
    <span class="ime-tab"></span>
    <svg class="ime-logo"><use href="#k-sogou"/></svg>
    <b>英</b>
    <svg class="ico" viewBox="0 0 16 16"><circle cx="4" cy="6" r="2" fill="#1e78c8"/><path d="M11 8q3 3-1 5" stroke="#1e78c8" stroke-width="2" fill="none"/></svg>
    <svg class="ico" viewBox="0 0 16 16"><rect x="5" y="0" width="6" height="10" rx="3" fill="#1e78c8"/><path d="M3 6c0 7 10 7 10 0M8 11v4M5 15h6" fill="none" stroke="#1e78c8" stroke-width="1.500"/></svg>
    <svg class="ico" viewBox="0 0 16 16"><rect y="2" width="16" height="12" rx="1" fill="#1e78c8"/><path d="M2 5.500h12M2 8.500h12M4 11.500h8" stroke="#fff" stroke-dasharray="2 1"/></svg>
    <svg class="ico" viewBox="0 0 16 16"><circle cx="6" cy="4" r="3.500" fill="#b0c0d4"/><path d="M0 14c0-8 12-8 12 0z" fill="#b0c0d4"/><path d="M7.500 9.500h8v5h-8z" fill="#fff" stroke="#a8b4c4"/></svg>
    <svg class="ico" viewBox="0 0 16 16"><path d="M5 1q3 2 6 0l5 3-2 4-2-1v8H4V7L2 8 0 4z" fill="#1e78c8"/></svg>
    <svg class="ico" viewBox="0 0 16 16"><path d="M2 14l7-7" stroke="#1e78c8" stroke-width="3.500"/><path d="M12 1c-5 0-6 7-2 8 3 1 6-1 5-5l-3 2-2-2z" fill="#1e78c8"/></svg>
  </div>

  <div class="menurow">
    <nav class="menu">
      <button>文件(F)</button><button>编辑(E)</button><button>楼层(L)</button><button>构件(N)</button><button>绘图(D)</button><button>修改(M)</button><button>钢筋量(Q)</button><button>视图(V)</button><button>工具(T)</button><button>云应用(Y)</button><button>BIM应用(I)</button><button>在线服务(S)</button><button>帮助(H)</button><button>版本号(B)</button>
    </nav>
    <button class="tool"><svg class="ico"><use href="#i-doc"/></svg>新建变更<i class="arr"></i></button>
    <button class="tool"><svg class="ico"><use href="#i-bot"/></svg>广小二</button>
    <a class="tip" href="#">为什么筏板XY方向布置..</a>
    <div class="account">
      <button class="tool"><svg class="ico"><use href="#i-user"/></svg>13907298339<i class="arr"></i></button>
      <span>造价豆:0</span>
      <button class="tool" aria-label="消息"><svg class="ico"><use href="#i-bell"/></svg></button>
      <b class="more">»</b>
    </div>
  </div>

  <div class="toprow">
    <div class="bar bar-file">
      <button class="tool" aria-label="新建"><svg class="ico"><use href="#i-new"/></svg></button>
      <button class="tool" aria-label="打开"><svg class="ico wide"><use href="#i-open"/></svg><i class="arr"></i></button>
      <button class="tool" aria-label="保存"><svg class="ico"><use href="#i-save"/></svg></button>
      <i class="sep"></i>
      <button class="tool" aria-label="撤销"><svg class="ico"><use href="#i-undo"/></svg><i class="arr"></i></button>
      <b class="more">»</b>
    </div>
    <div class="bar bar-calc">
      <button class="tool"><svg class="ico"><use href="#i-def"/></svg>定义</button>
      <button class="tool"><svg class="ico"><use href="#i-sum"/></svg>汇总计算</button>
      <button class="tool"><svg class="ico"><use href="#i-cloud"/></svg>云检查</button>
      <button class="tool" disabled><svg class="ico"><use href="#i-slab"/></svg>平齐板顶</button>
      <button class="tool"><svg class="ico"><use href="#i-find"/></svg>查找图元</button>
      <button class="tool"><svg class="ico"><use href="#i-glass"/></svg>查看钢筋量</button>
      <button class="tool"><svg class="ico"><use href="#i-batch"/></svg>批量选择</button>
      <b class="more">»</b>
    </div>
    <div class="bar bar-view">
      <button class="tool white"><svg class="ico"><use href="#i-flat"/></svg>二维<i class="arr"></i></button>
      <button class="tool"><svg class="ico"><use href="#i-cube"/></svg>俯视<i class="arr"></i></button>
      <button class="tool"><svg class="ico"><use href="#i-orbit"/></svg>动态观察</button>
      <button class="tool"><svg class="ico"><use href="#i-part"/></svg>局部三维</button>
      <i class="sep"></i>
      <button class="tool"><svg class="ico"><use href="#i-full"/></svg>全屏</button>
      <button class="tool"><svg class="ico"><use href="#i-zoom"/></svg>缩放<i class="arr"></i></button>
      <button class="tool"><svg class="ico"><use href="#i-pan"/></svg>平移<i class="arr"></i></button>
      <button class="tool"><svg class="ico"><use href="#i-scr"/></svg>屏幕旋转<i class="arr tight"></i></button>
      <i class="sep"></i>
      <button class="tool"><svg class="ico"><use href="#i-floor"/></svg>选择楼层</button>
      <b class="more">»</b>
    </div>
  </div>

  <div class="workspace">
    <aside class="nav">
      <div class="nav-title"><span>模块导航栏</span>
        <svg class="ico" viewBox="0 0 16 16"><path d="M5.500 4v5M9.500 4v5M5 4.500h5M3.500 9.500h8M7.500 10v3.500M8.500 4v5" stroke="#fff" fill="none"/></svg>
        <svg class="ico" viewBox="0 0 16 16"><path d="M4 5l7 7M11 5l-7 7" stroke="#fff"/></svg>
      </div>
      <button class="nav-tab">工程设置</button>
      <button class="nav-tab">绘图输入</button>
      <div class="nav-body">
        <div class="nav-tools">
          <svg width="40" height="20" viewBox="0 0 40 20"><path d="M0 7h9M4.500 2.500v9M8 12h9M12.500 7.500v9M23 7h9M30 13h9" stroke="#000" stroke-width="4"/><path d="M1 7h7M4.500 3.500v7M9 12h7M12.500 8.500v7M24 7h7M31 13h7" stroke="#1fa89a" stroke-width="1.600"/></svg>
        </div>
        <div class="tree-wrap">
          <div class="tree-main">
            <ul class="tree">
              <li class="leaf"><svg class="ico"><use href="#t-win"/></svg>窗(C)</li>
              <li class="leaf"><svg class="ico"><use href="#t-door"/></svg>门联窗(A)</li>
              <li class="leaf"><svg class="ico"><use href="#t-hole"/></svg>墙洞(D)</li>
              <li class="leaf"><svg class="ico"><use href="#t-niche"/></svg>壁龛(I)</li>
              <li class="leaf"><svg class="ico"><use href="#t-lb"/></svg>连梁(G)</li>
              <li class="leaf"><svg class="ico"><use href="#t-gl"/></svg>过梁(G)</li>
              <li class="leaf"><svg class="ico"><use href="#t-sh"/></svg>带形洞</li>
              <li class="leaf"><svg class="ico"><use href="#t-sw"/></svg>带形窗</li>
              <li class="branch"><i class="chev"></i><svg class="ico wide"><use href="#i-fold"/></svg>梁</li>
              <li class="branch"><i class="chev"></i><svg class="ico wide"><use href="#i-fold"/></svg>板</li>
              <li class="branch"><i class="chev open"></i><svg class="ico wide"><use href="#i-foldo"/></svg>基础</li>
              <li class="leaf"><svg class="ico"><use href="#t-fb"/></svg>基础梁(F)</li>
              <li class="leaf"><svg class="ico"><use href="#t-raft"/></svg>筏板基础(</li>
              <li class="leaf"><svg class="ico"><use href="#t-pit"/></svg>集水坑(K)</li>
              <li class="leaf"><svg class="ico"><use href="#t-pier"/></svg>柱墩(Y)</li>
              <li class="leaf"><svg class="ico"><use href="#t-main"/></svg>筏板主筋(</li>
              <li class="leaf"><svg class="ico"><use href="#t-neg"/></svg>筏板负筋(</li>
              <li class="leaf"><svg class="ico"><use href="#t-iso"/></svg>独立基础(</li>
              <li class="leaf"><svg class="ico"><use href="#t-strip"/></svg>条形基础(</li>
              <li class="leaf current"><svg class="ico"><use href="#t-cap"/></svg><span>桩承台(V)</span></li>
              <li class="leaf"><svg class="ico"><use href="#t-fb"/></svg>承台梁(F)</li>
              <li class="leaf"><svg class="ico"><use href="#t-pile"/></svg>桩(U)</li>
              <li class="leaf"><svg class="ico"><use href="#t-band"/></svg>基础板带(</li>
              <li class="branch"><i class="chev"></i><svg class="ico wide"><use href="#i-fold"/></svg>其它</li>
              <li class="branch"><i class="chev open"></i><svg class="ico wide"><use href="#i-foldo"/></svg>自定义</li>
              <li class="leaf"><svg class="ico"><use href="#t-cx"/></svg>自定义点</li>
              <li class="leaf"><svg class="ico"><use href="#t-cl"/></svg>自定义线(</li>
              <li class="leaf"><svg class="ico"><use href="#t-cf"/></svg>自定义面</li>
              <li class="leaf"><svg class="ico"><use href="#t-cd"/></svg>尺寸标注(</li>
              <li class="branch"><i class="chev"></i><svg class="ico wide"><use href="#i-fold"/></svg>CAD识别<i class="newtag"></i></li>
            </ul>
            <div class="vscroll"><i class="caret up"></i><span class="thumb"></span><i class="caret down"></i></div>
          </div>
          <div class="hscroll"><i class="caret left"></i><span class="thumb"></span><i class="caret right"></i></div>
        </div>
      </div>
      <button class="nav-tab">单构件输入</button>
      <button class="nav-tab">报表预览</button>
    </aside>

    <main class="main">
      <div class="row">
        <div class="bar">
          <i class="grip"></i>
          <button class="tool"><svg class="ico"><use href="#i-brush"/></svg>删除</button><i class="sep"></i>
          <button class="tool"><svg class="ico"><use href="#i-copy"/></svg>复制</button>
          <button class="tool"><svg class="ico"><use href="#i-mirror"/></svg>镜像</button><i class="sep"></i>
          <button class="tool"><svg class="ico"><use href="#i-move"/></svg>移动</button>
          <button class="tool"><svg class="ico"><use href="#i-rot"/></svg>旋转</button><i class="sep"></i>
          <button class="tool" disabled><svg class="ico"><use href="#i-ext"/></svg>延伸</button>
          <button class="tool" disabled><svg class="ico"><use href="#i-trim"/></svg>修剪</button><i class="sep"></i>
          <button class="tool" disabled><svg class="ico"><use href="#i-brk"/></svg>打断</button>
          <button class="tool" disabled><svg class="ico"><use href="#i-mrg"/></svg>合并</button>
          <button class="tool" disabled><svg class="ico"><use href="#i-split"/></svg>分割</button><i class="sep"></i>
          <button class="tool"><svg class="ico"><use href="#i-align"/></svg>对齐<i class="arr tight"></i></button>
          <button class="tool"><svg class="ico"><use href="#i-offset"/></svg>偏移</button>
          <button class="tool" disabled><svg class="ico"><use href="#i-pull"/></svg>拉伸</button><i class="sep"></i>
          <button class="tool" disabled><svg class="ico"><use href="#i-grip"/></svg>设置夹点</button>
        </div>
      </div>

      <div class="row">
        <div class="bar">
          <i class="grip"></i>
          <label class="combo short"><select aria-label="楼层"><option>基础层</option></select><i class="arr"></i></label>
          <label class="combo"><select aria-label="构件大类"><option>基础</option></select><i class="arr"></i></label>
          <label class="combo"><select aria-label="构件类型"><option>桩承台</option></select><i class="arr"></i></label>
          <label class="combo"><select aria-label="构件名称"><option>CT-71</option></select><i class="arr"></i></label>
          <label class="combo"><select aria-label="单元"><option>整体</option></select><i class="arr"></i></label>
          <i class="sep"></i>
          <button class="tool"><svg class="ico"><use href="#i-prop"/></svg>属性</button>
          <button class="tool on"><svg class="ico"><use href="#i-pen"/></svg>编辑钢筋</button>
          <button class="tool"><svg class="ico"><use href="#i-list"/></svg>构件列表</button>
          <button class="tool"><svg class="ico"><use href="#i-pick"/></svg>拾取构件</button>
        </div>
        <div class="bar">
          <i class="grip"></i>
          <button class="tool"><svg class="ico"><use href="#i-two"/></svg>两点</button>
          <button class="tool"><svg class="ico"><use href="#i-par"/></svg>平行</button>
          <button class="tool"><svg class="ico"><use href="#i-ang"/></svg>点角<i class="arr"></i></button>
          <button class="tool"><svg class="ico"><use href="#i-three"/></svg>三点辅轴<i class="arr"></i></button>
          <button class="tool"><svg class="ico"><use href="#i-brush"/></svg>删除辅轴</button>
          <button class="tool"><svg class="ico"><use href="#i-dim"/></svg>尺寸标注<i class="arr"></i></button>
        </div>
      </div>

      <div class="row">
        <div class="bar">
          <i class="grip"></i>
          <button class="tool on"><svg class="ico"><use href="#i-cur"/></svg>选择</button><i class="arr"></i><i class="sep"></i>
          <button class="tool"><svg class="ico"><use href="#i-pt"/></svg>点</button>
          <button class="tool"><svg class="ico"><use href="#i-rpt"/></svg>旋转点</button><i class="sep"></i>
          <button class="tool" disabled><svg class="ico"><use href="#i-line"/></svg>直线</button>
          <button class="tool" disabled><svg class="ico"><use href="#i-arc"/></svg>三点画弧<i class="arr"></i></button>
          <label class="combo boxed"><select aria-label="画弧方式" disabled><option></option></select><i class="arr"></i></label>
          <button class="tool" disabled><svg class="ico"><use href="#i-rect"/></svg>矩形</button><i class="sep"></i>
          <button class="tool"><svg class="ico"><use href="#i-smart"/></svg>智能布置<i class="arr tight"></i></button><i class="sep"></i>
          <button class="tool" disabled><svg class="ico"><use href="#i-dir"/></svg>调整钢筋方向</button>
          <button class="tool" disabled><svg class="ico"><use href="#i-stf"/></svg>编辑承台加强筋</button>
          <button class="tool"><svg class="ico"><use href="#i-chk"/></svg>查改标注<i class="arr"></i></button>
          <button class="tool"><svg class="ico"><use href="#i-same"/></svg>应用到同名承台</button>
          <button class="tool"><svg class="ico"><use href="#i-slope"/></svg>调整承台放坡</button>
        </div>
        <div class="bar stub"><i class="grip"></i></div>
      </div>

      <!-- drawing area -->
      <svg class="cad">
        <g class="cap">
          <path d="M380 48h43l11 32 8 20v43h-82v-43z"/>
          <path d="M588 15h83v37l41 41h45v83H649l-61-61z"/>
          <path d="M1050 65h62v61h-62z"/>
        </g>
        <circle cx="1348" cy="197" r="160" fill="#b9b9b9"/>
        <g class="bars">
          <path d="M377 56h46M368 80v63M434 80v63M360 135h82M389 48l-29 77M413 48l29 77"/>
          <path d="M665 15v161M701 82v94M588 90h121M596 122h161"/>
        </g>
        <g class="tiny">
          <path d="M389 54h24M389 132h24M371 98v28M437 98v28M636 87h26M664 118h26M667 83v25M704 116v26"/>
        </g>
        <g class="minor">
          <path d="M466.500 96v151M702.500 96v151M721.500 96v151M789.500 96v151M827.500 96v151M896.500 96v151M915.500 96v151M1080 176.500h142"/>
        </g>
        <g class="major">
          <path d="M0 95.500h896M1080 95.500h142M0 194.500h896M1080 194.500h142"/>
          <path d="M128.500 96v151M264.500 96v151M400.500 96v151M672.500 96v151M808.500 96v151M944.500 96v151M1080.500 96v151M1216.500 96v151"/>
        </g>
        <g class="axis">
          <path d="M0 33.500h1222M128.500 0v95M264.500 0v95M400.500 0v95M466.500 0v95M672.500 0v95M702.500 0v95M721.500 0v95M789.500 0v95M808.500 0v95M827.500 0v95M896.500 0v95M915.500 0v95M944.500 0v95M1080.500 0v95M1216.500 0v95"/>
          <path d="M401 54.500h66M702 54.500h214M896 95.500h184M896 176.500h184M896 194.500h184M957.500 95v152M1019.500 95v152M1039.500 176v18"/>
          <path d="M119.500 42.500l18-17M255.500 42.500l18-17M391.500 42.500l18-17M663.500 42.500l18-17M799.500 42.500l18-17M935.500 42.500l18-17M1071.500 42.500l18-17M1207.500 42.500l18-17"/>
          <path d="M392 62.500l17-17M458 62.500l17-17M694 62.500l17-17M713 62.500l17-17M781 62.500l17-17M800 62.500l17-17M819 62.500l17-17M888 62.500l17-17M907 62.500l17-17"/>
          <path d="M948 86l18 18M1010 86l18 18M1010 185l18 18M1031 168l17 17M1031 186l18 18"/>
          <circle cx="129" cy="13" r="12.500"/><circle cx="265" cy="13" r="12.500"/><circle cx="401" cy="13" r="12.500"/><circle cx="673" cy="13" r="12.500"/><circle cx="809" cy="13" r="12.500"/><circle cx="945" cy="13" r="12.500"/><circle cx="1081" cy="13" r="12.500"/><circle cx="1208" cy="13" r="12.500"/>
          <circle cx="13" cy="95.500" r="12.500"/><circle cx="13" cy="194.500" r="12.500"/><circle cx="882.500" cy="95.500" r="12.500"/><circle cx="882.500" cy="194.500" r="12.500"/>
        </g>
        <g class="dims">
          <text x="62" y="18">3300</text><text x="129" y="18">2</text><text x="198" y="18">3300</text><text x="265" y="18">3</text><text x="334" y="18">3300</text><text x="401" y="18">4</text>
          <text x="538" y="18">6600</text><text x="673" y="18">5</text><text x="742" y="18">3300</text><text x="809" y="18">6</text><text x="878" y="18">3300</text><text x="945" y="18">7</text><text x="1014" y="18">3300</text><text x="1081" y="18">8</text><text x="1150" y="18">3300</text><text x="1208" y="18">2</text>
          <text x="436" y="60">1600</text><text x="713" y="60">462</text><text x="757" y="60">1662</text><text x="801" y="60">462</text><text x="820" y="60">462</text><text x="863" y="60">1662</text><text x="907" y="60">462</text>
          <text x="13" y="101">E</text><text x="13" y="200">D</text><text x="882" y="101">E</text><text x="882" y="200">D</text>
          <text transform="translate(1045 144) rotate(-90)">2400</text><text transform="translate(1045 185) rotate(-90)">433</text>
        </g>
        <path d="M53 197v-38h-2l4-11 4 11h-2v38z" fill="#0f0"/>
        <path d="M55 195h37v-3l12 5-12 5v-3H55z" fill="#f00"/>
        <path d="M64 151l5 5v4M74 151l-5 5" fill="none" stroke="#0f0"/>
        <path d="M92 176l9 10M101 176l-9 10" fill="none" stroke="#f00"/>
      </svg>

      <div class="row snap">
        <div class="bar">
          <i class="grip"></i>
          <button class="tool"><svg class="ico"><use href="#i-ortho"/></svg>正交</button>
          <button class="tool on"><svg class="ico"><use href="#i-snap"/></svg>对象捕捉</button>
          <button class="tool on"><svg class="ico"><use href="#i-dyn"/></svg>动态输入</button>
        </div>
      </div>

      <div class="editor">
        <div class="gutter"><svg width="10" height="10" viewBox="0 0 10 10"><path d="M.5.500h9v9h-9z" fill="#fff" stroke="#333"/><path d="M1 1h8v2H1z" fill="#a84848"/><path d="M2 2.500l6 6M8 2.500l-6 6" stroke="#111" stroke-width="1.300"/></svg></div>
        <section class="rebar">
          <div class="bar wide">
            <button class="tool" disabled aria-label="首行"><svg class="ico"><use href="#i-first"/></svg></button>
            <button class="tool" disabled aria-label="上一行"><svg class="ico"><use href="#i-prev"/></svg></button>
            <button class="tool" disabled aria-label="下一行"><svg class="ico"><use href="#i-next"/></svg></button>
            <button class="tool" disabled aria-label="末行"><svg class="ico"><use href="#i-last"/></svg></button><i class="sep"></i>
            <button class="tool" disabled aria-label="上移"><svg class="ico"><use href="#i-up"/></svg></button>
            <button class="tool" disabled aria-label="下移"><svg class="ico"><use href="#i-down"/></svg></button><i class="sep"></i>
            <button class="tool" disabled><svg class="ico"><use href="#i-ins"/></svg>插入</button>
            <button class="tool" disabled><svg class="ico"><use href="#i-delr"/></svg>删除</button>
            <button class="tool" disabled><svg class="ico"><use href="#i-sca"/></svg>缩尺配筋</button>
            <button class="tool" disabled><svg class="ico"><use href="#i-info"/></svg>钢筋信息</button>
            <button class="tool" disabled><svg class="ico"><use href="#i-lib"/></svg>钢筋图库</button>
            <button class="tool"><svg class="ico"><use href="#i-other"/></svg>其他<i class="arr tight"></i></button>
            <button class="tool plain">关闭</button><i class="sep"></i>
            <span class="total">单构件钢筋总重(kg)：0</span>
          </div>
          <div class="grid">
            <table>
              <colgroup><col class="c-33"><col class="c-73"><col class="c-56"><col class="c-36"><col class="c-33"><col><col class="c-166"><col class="c-156"><col class="c-61"><col class="c-38"><col class="c-38"><col class="c-49"><col class="c-61"><col class="c-61"><col class="c-71"><col class="c-73"></colgroup>
              <thead>
                <tr><th></th><th>筋号</th><th class="hot">直径(mm)</th><th>级别</th><th>图号</th><th>图形</th><th>计算公式</th><th>公式描述</th><th>长度(mm)</th><th>根数</th><th>搭接</th><th>损耗(%)</th><th>单重(kg)</th><th>总重(kg)</th><th>钢筋归类</th><th>搭接形式</th></tr>
              </thead>
              <tbody>
                <tr><th class="rowno">1*</th><td></td><td class="edit"></td><td></td><td></td><td></td><td></td><td></td><td></td><td></td><td></td><td></td><td></td><td></td><td></td><td></td></tr>
              </tbody>
            </table>
            <div class="hscroll big"><i class="caret left"></i><div class="track"><span class="thumb"></span></div><i class="caret right"></i></div>
          </div>
        </section>
      </div>
    </main>
  </div>

  <footer class="status">
    <span class="s-xy">X=145867 Y=17833</span><span class="s-h">层高:3.47m</span><span class="s-b">底标高:-3.5m</span><span class="s-n">0</span><span class="s-msg">按鼠标左键指定第一个角点，或拾取构件图元</span><span class="s-fps">553.7 FPS</span>
  </footer>

  <div class="taskbar">
    <button class="task" aria-label="开始"><svg class="t18"><use href="#k-start"/></svg></button>
    <label class="search"><i class="ring"></i><input type="text" placeholder="在这里输入你要搜索的内容"><svg class="ico"><use href="#k-mic"/></svg></label>
    <div class="tasks">
      <button class="task"><svg class="t24"><use href="#k-fan"/></svg></button>
      <button class="task"><svg class="t24"><use href="#k-swirl"/></svg></button>
      <button class="task"><svg class="t24"><use href="#k-edge"/></svg></button>
      <button class="task"><svg class="t24"><use href="#k-store"/></svg></button>
      <button class="task"><svg class="t24"><use href="#k-exp"/></svg></button>
      <button class="task"><svg class="t24"><use href="#k-ie"/></svg></button>
      <button class="task run"><svg class="t24"><use href="#k-gld"/></svg></button>
      <button class="task run"><svg class="t24"><use href="#k-pdf"/></svg></button>
      <button class="task run"><svg class="t24"><use href="#k-note"/></svg></button>
      <button class="task run active"><svg class="t24"><use href="#i-app"/></svg></button>
      <button class="task run"><svg class="t24"><use href="#k-help"/></svg></button>
      <button class="task run"><svg class="t24"><use href="#k-green"/></svg></button>
    </div>
    <div class="cpu">33%<br>CPU使用</div>
    <div class="tray">
      <svg class="ico"><use href="#k-up"/></svg>
      <svg class="ico"><use href="#k-bat"/></svg>
      <svg class="ico"><use href="#k-wifi"/></svg>
      <svg class="ico wide"><use href="#k-vol"/></svg>
      <svg class="kb"><use href="#k-kb"/></svg>
      <span>英</span>
      <svg class="ico"><use href="#k-sogou"/></svg>
    </div>
    <div class="clock">19:42<br>2017/10/8</div>
    <button class="task note" aria-label="通知"><svg class="t18"><use href="#k-act"/></svg><span class="badge">20</span></button>
    <i class="peek"></i>
  </div>

</body>
</html>
```

FILE: styles.css
```css
* {
  box-sizing: border-box;
}

body {
  margin: 0;
  height: 100vh;
  display: flex;
  flex-direction: column;
  overflow: hidden;
  background: #f0f0f0;
  color: #000;
  font-family: 'Noto Sans', 'Noto Sans CJK SC', sans-serif;
  font-size: 12px;
  line-height: 16px;
}

button,
select,
input {
  font: inherit;
  color: inherit;
  border: 0;
  padding: 0;
  margin: 0;
  background: none;
}

.sprite {
  position: absolute;
  width: 0;
  height: 0;
}

svg {
  flex: none;
}

.ico {
  width: 16px;
  height: 16px;
}

.ico.wide {
  width: 18px;
}

/* title bar */
.titlebar {
  display: flex;
  align-items: center;
  height: 23px;
  flex: none;
  padding-left: 2px;
  gap: 4px;
  background: #fff;
}

.titlebar h1 {
  flex: 1;
  margin: 0;
  font-family: Inter, 'Noto Sans CJK SC', sans-serif;
  font-size: 12px;
  font-weight: normal;
  white-space: nowrap;
}

.win-buttons {
  display: flex;
}

.win-buttons button {
  width: 46px;
  height: 20px;
}

.ime {
  position: absolute;
  left: 867px;
  top: 3px;
  height: 24px;
  display: flex;
  align-items: center;
  gap: 6px;
  padding: 0 3px 0 20px;
  border: 1px solid #a9bfd8;
  background: #fdfeff;
}

.ime b {
  font-size: 15px;
  color: #1e78c8;
}

.ime-logo {
  position: absolute;
  left: -14px;
  top: -4px;
  width: 28px;
  height: 28px;
}

.ime-tab {
  position: absolute;
  left: 12px;
  top: -4px;
  width: 42px;
  height: 4px;
  background: #3cc060;
}

/* menu */
.menurow {
  display: flex;
  align-items: center;
  height: 29px;
  flex: none;
}

.menu {
  display: flex;
  gap: 11px;
  padding: 0 8px 0 7px;
}

.menu button,
.tool {
  white-space: nowrap;
}

.tip {
  align-self: stretch;
  flex: 1;
  display: flex;
  align-items: center;
  padding-left: 29px;
  margin-left: 3px;
  color: #006a6a;
  text-decoration: none;
  background: #f6f6f6;
  white-space: nowrap;
}

.account {
  display: flex;
  align-items: center;
  align-self: stretch;
  gap: 3px;
  width: 241px;
  margin-left: 2px;
  padding-left: 2px;
  background: #f6f6f6;
}

.more {
  align-self: flex-start;
  margin-left: auto;
  padding: 0 5px;
  font-size: 14px;
}

/* toolbars */
.bar {
  display: flex;
  align-items: center;
  height: 28px;
  border-radius: 3px;
  background: linear-gradient(#fbfbfb, #efefef);
}

.row {
  display: flex;
  gap: 2px;
  height: 28px;
  flex: none;
  padding-left: 4px;
}

.row .bar {
  padding-right: 2px;
}

.toprow {
  display: flex;
  gap: 4px;
  height: 30px;
  flex: none;
  padding-top: 1px;
}

.bar-file {
  width: 149px;
  padding-left: 1px;
}

.bar-calc {
  width: 548px;
  padding-left: 1px;
}

.bar-view {
  flex: 1;
}

.tool {
  display: flex;
  align-items: center;
  gap: 4px;
  height: 23px;
  padding: 0 4px 0 3px;
}

.tool:disabled {
  color: #868686;
}

.tool.on {
  border: 1px solid #0078d7;
  background: #dceaf6;
  padding: 0 3px 0 2px;
}

.tool.white {
  gap: 2px;
  margin-right: 2px;
  background: #fff;
}

.tool.plain {
  padding-left: 6px;
}

.bar-file .tool {
  padding: 0 3px 0 4px;
}

.arr {
  display: inline-flex;
  justify-content: center;
  width: 8px;
  flex: none;
  margin-left: 1px;
}

.arr.tight {
  width: 6px;
  margin-left: -2px;
}

.arr::after {
  content: "";
  border: 3px solid transparent;
  border-top-color: #000;
  border-bottom: 0;
}

:disabled .arr::after,
.boxed .arr::after {
  border-top-color: #777;
}

.sep {
  width: 1px;
  height: 15px;
  margin: 0 2px 0 3px;
  background: #b8b8b8;
}

.grip {
  width: 3px;
  height: 15px;
  margin: 0 1px 0 0;
  background: repeating-linear-gradient(#b4b4b4 0 2px, transparent 2px 4px);
}

.combo {
  display: flex;
  align-items: center;
  width: 68px;
  height: 22px;
  margin: 0 2px;
  padding-right: 1px;
  background: linear-gradient(to left, #f6f6f6 12px, #fff 12px);
}

.combo.short {
  width: 56px;
}

.combo.boxed {
  width: 56px;
  margin: 0 2px 0 1px;
  border: 1px solid #777;
  background: #f2f2f2;
}

.combo select {
  appearance: none;
  flex: 1;
  min-width: 0;
  padding-left: 1px;
}

.stub {
  width: 31px;
}

/* work area */
.workspace {
  display: flex;
  flex: 1;
  min-height: 0;
  padding-top: 1px;
}

.nav {
  display: flex;
  flex-direction: column;
  width: 140px;
  flex: none;
  font-family: 'Liberation Serif', 'Noto Sans CJK SC', serif;
}

.nav-title {
  display: flex;
  align-items: center;
  height: 16px;
  margin-top: 1px;
  padding-left: 1px;
  background: #0052e6;
  color: #fff;
}

.nav-title span {
  flex: 1;
}

.nav-tab {
  height: 22px;
  flex: none;
  margin: 0 0 0 1px;
  border: 1px solid #9a9a9a;
  border-bottom-width: 0;
  background: #f0f0f0;
}

.nav-tab:last-child {
  border-bottom-width: 1px;
}

.nav-title + .nav-tab {
  margin-top: 1px;
}

.nav-body {
  flex: 1;
  min-height: 0;
  display: flex;
  flex-direction: column;
  margin-left: 1px;
  padding: 0 1px 1px;
  border: 1px solid #8c96a0;
}

.nav-tools {
  height: 26px;
  padding: 4px 0 0 5px;
}

.tree-wrap {
  flex: 1;
  min-height: 0;
  display: flex;
  flex-direction: column;
  border: 1px solid #82878f;
  background: #fff;
}

.tree-main {
  flex: 1;
  min-height: 0;
  display: flex;
}

.tree {
  position: relative;
  flex: 1;
  min-width: 0;
  overflow: hidden;
  list-style: none;
  margin: 0;
  padding: 1px 0 0;
}

.tree li {
  display: flex;
  align-items: center;
  height: 16px;
  white-space: nowrap;
  gap: 4px;
}

.leaf {
  padding-left: 42px;
  background:
    repeating-linear-gradient(#999 0 1px, transparent 1px 2px) 12px 0 / 1px 16px no-repeat,
    repeating-linear-gradient(#999 0 1px, transparent 1px 2px) 31px 0 / 1px 16px no-repeat,
    repeating-linear-gradient(to right, #999 0 1px, transparent 1px 2px) 31px 8px / 11px 1px no-repeat;
}

.branch {
  padding-left: 8px;
}

.branch .ico {
  margin: 0 -1px 0 3px;
}

.current {
  padding-right: 1px;
}

.current span {
  flex: 1;
  margin-left: -4px;
  padding-left: 4px;
  background: #d8d8d8;
}

.newtag {
  width: 24px;
  height: 14px;
  background: linear-gradient(to right, #58a8f0 16px, #f0d000 16px);
}

.chev,
.caret {
  display: block;
  width: 7px;
  height: 7px;
  flex: none;
  border: solid #999;
  border-width: 2px 2px 0 0;
  transform: rotate(45deg) scale(.8);
}

.chev.open {
  border-color: #333;
  transform: rotate(135deg) scale(.8);
}

.caret {
  border-color: #505050;
}

.caret.up {
  transform: rotate(-45deg) scale(.8);
}

.caret.down {
  transform: rotate(135deg) scale(.8);
}

.caret.left {
  transform: rotate(-135deg) scale(.8);
}

.vscroll {
  display: flex;
  flex-direction: column;
  align-items: center;
  width: 17px;
  padding: 8px 0 6px;
  background: #f0f0f0;
}

.vscroll .thumb {
  width: 15px;
  height: 245px;
  margin: auto 0 13px;
  background: #cdcdcd;
}

.hscroll {
  display: flex;
  align-items: center;
  height: 17px;
  flex: none;
  padding: 0 24px 0 6px;
  background: #f0f0f0;
}

.hscroll .thumb {
  width: 63px;
  height: 15px;
  margin: 0 auto 0 5px;
  background: #cdcdcd;
}

/* main column */
.main {
  flex: 1;
  min-width: 0;
  display: flex;
  flex-direction: column;
  padding-left: 4px;
}

.cad {
  display: block;
  width: 100%;
  height: 247px;
  margin-top: 1px;
  background: #000;
  shape-rendering: crispEdges;
}

.cap {
  fill: #7f7f00;
}

.bars {
  stroke: #b452a0;
  stroke-width: 2;
  fill: none;
}

.tiny {
  stroke: #8c8468;
  stroke-width: 2;
  stroke-dasharray: 6 1 2 1;
}

.minor {
  stroke: #7f0000;
}

.major {
  stroke: #f00;
}

.axis {
  stroke: #007f00;
  fill: none;
}

.dims {
  fill: #dcdcdc;
  font-family: Roboto, sans-serif;
  font-size: 15px;
  text-anchor: middle;
}

.row.snap {
  height: 32px;
  padding-top: 1px;
}

.snap .bar {
  height: 26px;
}

.editor {
  flex: 1;
  min-height: 0;
  display: flex;
}

.gutter {
  width: 13px;
  padding: 0 0 0 1px;
  background: radial-gradient(circle, #bbb 1px, transparent 1px) 1px 12px / 5px 5px;
}

.gutter svg {
  display: block;
  background: #f0f0f0;
}

.rebar {
  flex: 1;
  min-width: 0;
  display: flex;
  flex-direction: column;
}

.bar.wide {
  height: 26px;
  flex: none;
}

.total {
  padding-left: 5px;
}

.grid {
  flex: 1;
  min-height: 0;
  display: flex;
  flex-direction: column;
  justify-content: space-between;
  border: 1px solid #a8a8a8;
  padding: 1px 0;
  background: #fff;
}

table {
  width: 100%;
  table-layout: fixed;
  border-collapse: separate;
  border-spacing: 0;
  font-family: 'Liberation Serif', 'Noto Sans CJK SC', serif;
}

th,
td {
  height: 19px;
  padding: 0;
  border: solid #c0c0c0;
  border-width: 0 1px 1px 0;
  font-weight: normal;
  white-space: nowrap;
}

thead th {
  background: linear-gradient(#fff, #efefef);
}

thead .hot {
  background: linear-gradient(#fad58c, #f2b95c);
  color: #5c0040;
}

.rowno {
  background: #ffd38c;
  color: #5c0040;
}

.edit {
  background: #d8e9f8;
  border-left: 1px solid #000;
}

.c-33 { width: 33px; }
.c-36 { width: 36px; }
.c-38 { width: 38px; }
.c-49 { width: 49px; }
.c-56 { width: 56px; }
.c-61 { width: 61px; }
.c-71 { width: 71px; }
.c-73 { width: 73px; }
.c-156 { width: 156px; }
.c-166 { width: 166px; }

.hscroll.big {
  padding: 0 7px;
}

.track {
  flex: 1;
  margin: 0 6px 0 3px;
}

.track .thumb {
  display: block;
  width: 72%;
  margin: 0;
}

/* status bar */
.status {
  display: flex;
  gap: 2px;
  height: 22px;
  flex: none;
  padding-top: 2px;
  font-family: 'Liberation Serif', 'Noto Sans CJK SC', serif;
}

.status span {
  padding: 1px 0 0 1px;
  border: 1px solid #d4d4d4;
  background: linear-gradient(#fcfcfc, #f0f0f0);
  white-space: nowrap;
}

.s-xy { width: 148px; }
.s-h { width: 78px; }
.s-b { width: 98px; }
.s-n { width: 48px; }
.s-msg { flex: 1; }
.s-fps { width: 70px; }

/* taskbar */
.taskbar {
  display: flex;
  align-items: stretch;
  height: 40px;
  flex: none;
  background: linear-gradient(to right, #000 0, #020c0f 400px, #031316 1240px, #000);
  color: #fff;
}

.task {
  position: relative;
  display: flex;
  align-items: center;
  justify-content: center;
  width: 48px;
}

.t18 {
  width: 18px;
  height: 18px;
}

.t24 {
  width: 24px;
  height: 24px;
}

.search {
  display: flex;
  align-items: center;
  width: 344px;
  padding: 0 12px 0 9px;
  background: #333;
}

.search input {
  flex: 1;
  font-size: 14px;
}

.search input::placeholder {
  color: #a0a0a0;
}

.ring {
  width: 22px;
  height: 22px;
  margin-right: 5px;
  border: 3px solid #fff;
  border-radius: 50%;
}

.tasks {
  display: flex;
  padding-left: 2px;
}

.run::after {
  content: "";
  position: absolute;
  left: 5px;
  right: 5px;
  bottom: 0;
  height: 2px;
  background: #76b9ed;
}

.active {
  background: #2e3a3d;
}

.active::after {
  left: 0;
  right: 0;
}

.cpu {
  width: 92px;
  padding-top: 4px;
  text-align: center;
}

.tray {
  display: flex;
  align-items: center;
  gap: 8px;
  margin-left: auto;
}

.kb {
  width: 24px;
  height: 16px;
}

.tray span {
  margin: 0 2px;
}

.clock {
  width: 94px;
  padding-top: 3px;
  line-height: 18px;
  text-align: center;
}

.note {
  width: 38px;
  justify-content: flex-start;
  padding-left: 1px;
}

.badge {
  position: absolute;
  left: 7px;
  top: 17px;
  width: 20px;
  height: 20px;
  border: 1px solid #888;
  border-radius: 50%;
  background: #222;
  font-size: 12px;
  line-height: 18px;
}

.peek {
  width: 5px;
  border-left: 1px solid #555;
}
```
